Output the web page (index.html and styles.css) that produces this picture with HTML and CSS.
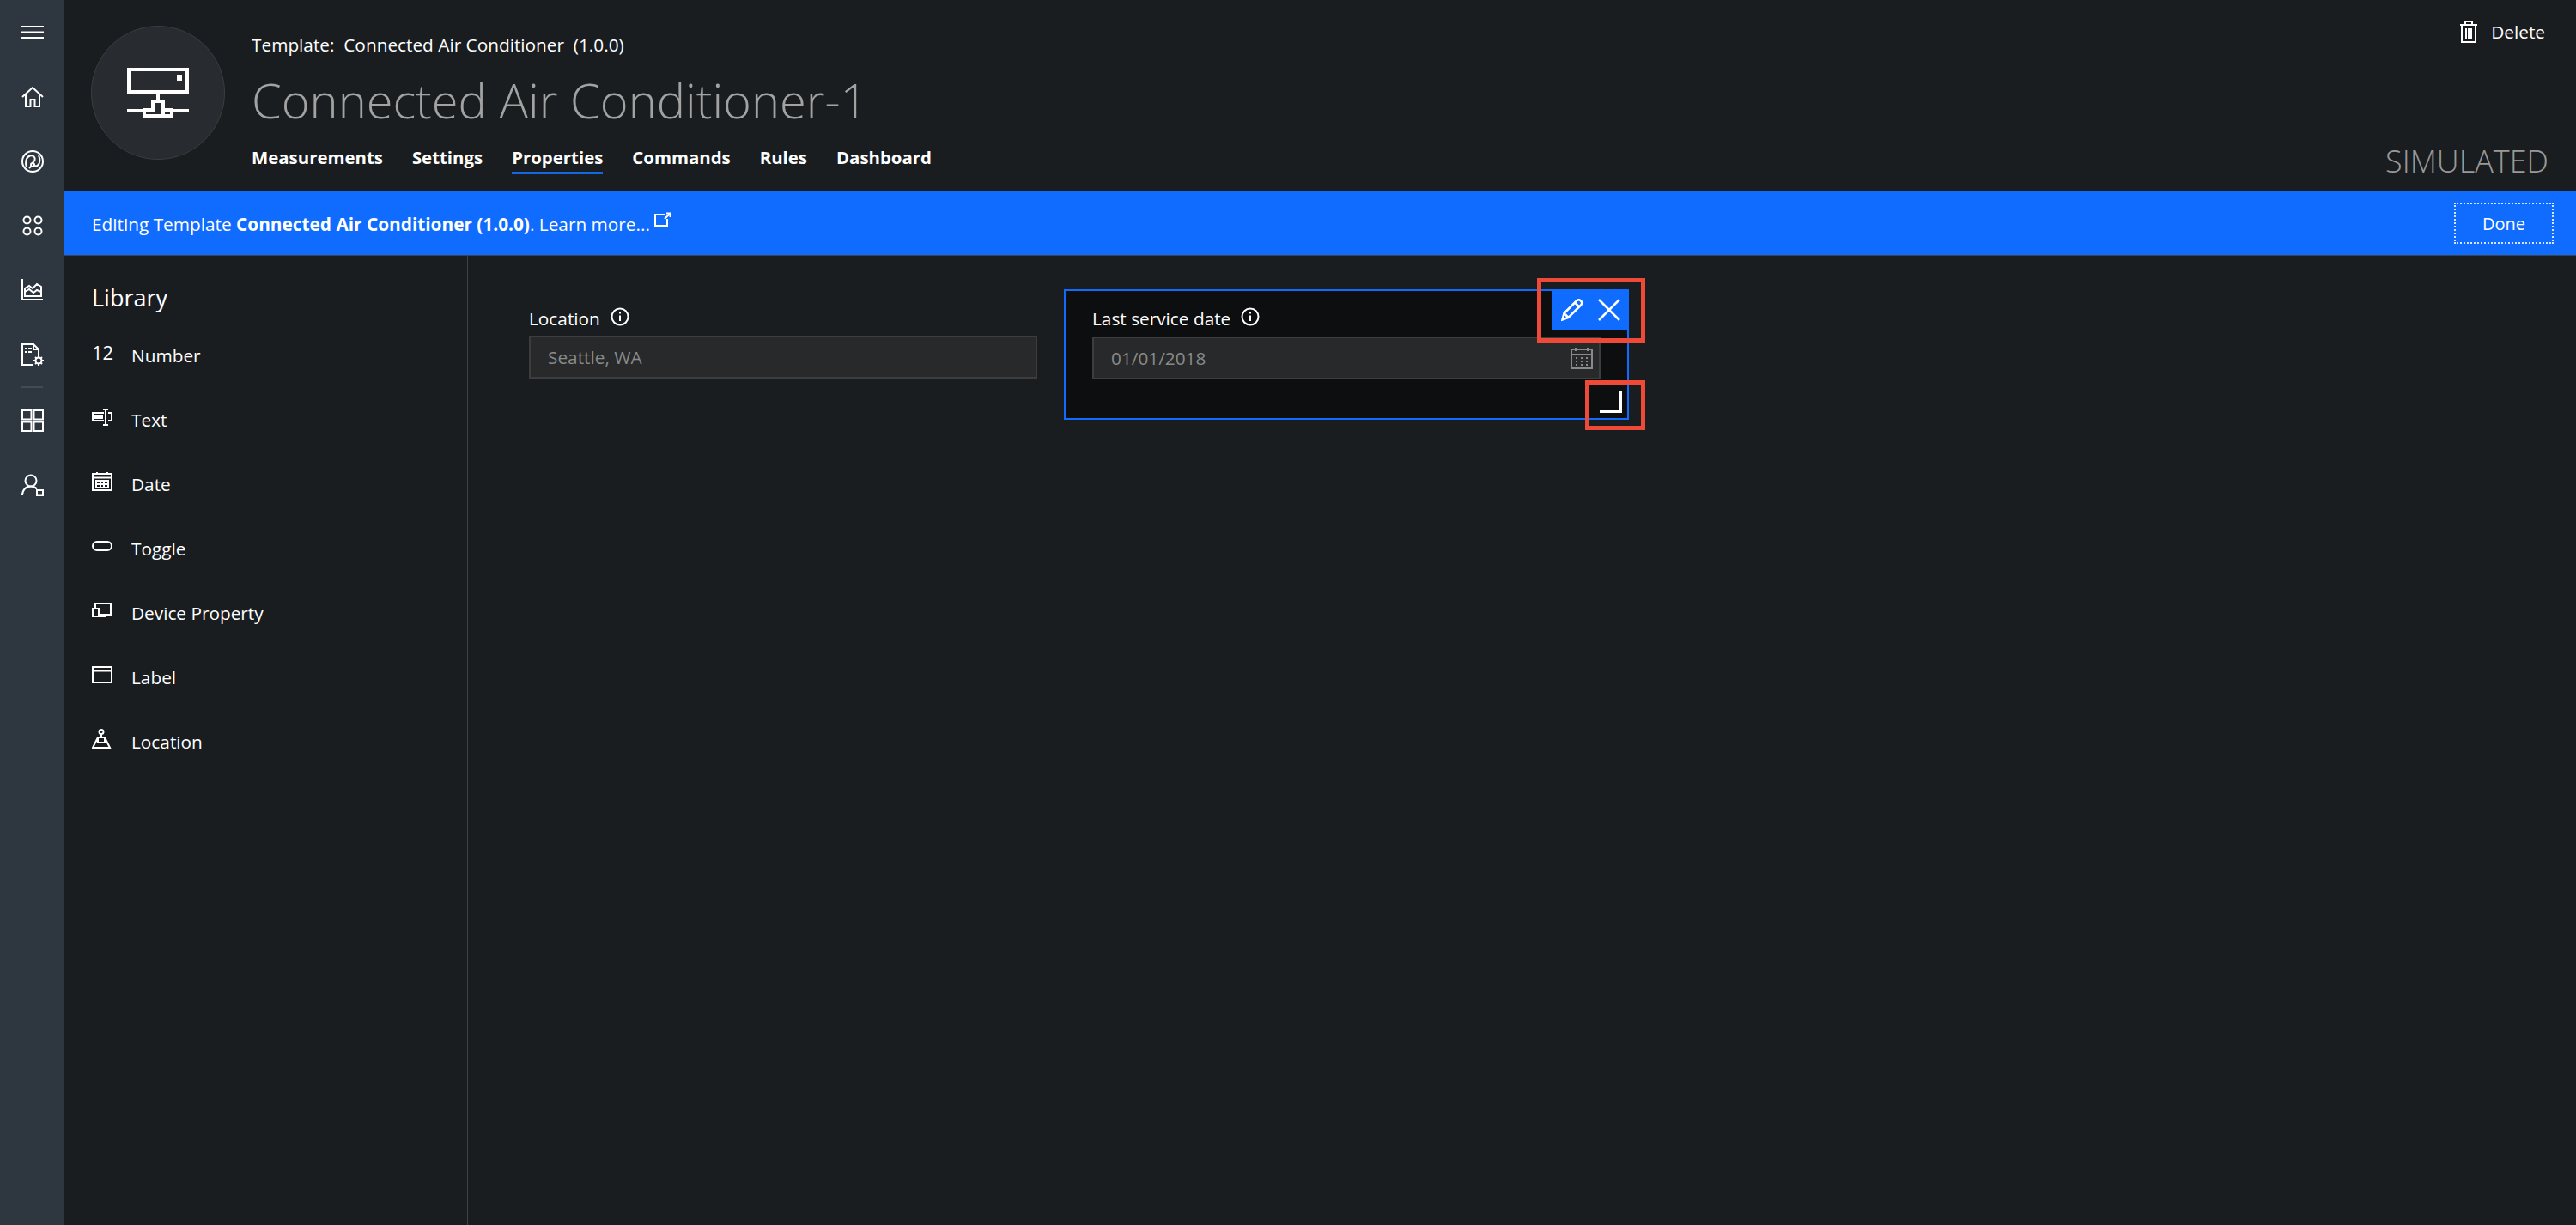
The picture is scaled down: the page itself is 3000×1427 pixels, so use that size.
FILE: index.html
```html
<!DOCTYPE html>
<html lang="en">
<head>
    <meta charset="UTF-8">
    <meta name="viewport" content="width=device-width, initial-scale=1.0">
    <title>Connected Air Conditioner-1</title>
    <link rel="stylesheet" href="styles.css">
</head>
<body>
    <nav class="rail">
        <div class="rail-item"><svg class="rail-icon" viewBox="0 0 26 26"><path d="M0 6h26M0 12.500h26M0 19h26"/></svg></div>
        <div class="rail-item"><svg class="rail-icon" viewBox="0 0 26 26"><path d="M1 13 13 2l12 11M5 10v14h5.500v-8h5v8H21V10"/></svg></div>
        <div class="rail-item"><svg class="rail-icon" viewBox="0 0 26 26"><circle cx="13" cy="13" r="12"/><path d="M6 20c-2-5-1-12 4-13.500 4-1 6.500 2 5.500 5-.5 1.500-2 2-2.500 3.500M20 6c2 4 2 9-1 11.500-1 1-2.500 1-3.500.5"/><circle cx="13" cy="17" r="2"/><path d="M11.500 18.500 9 21"/></svg></div>
        <div class="rail-item"><svg class="rail-icon" viewBox="0 0 26 26"><circle cx="6.500" cy="6.500" r="4"/><circle cx="19.500" cy="6.500" r="4"/><circle cx="6.500" cy="19.500" r="4"/><circle cx="19.500" cy="19.500" r="4"/></svg></div>
        <div class="rail-item"><svg class="rail-icon" viewBox="0 0 26 26"><path d="M1 0v24h24M4 20V11l5-3 4 3 5-5 5 3v11zM4 15l5-3 5 4 4-3 5 2"/></svg></div>
        <div class="rail-item"><svg class="rail-icon" viewBox="0 0 26 26"><path d="M14 25H1V1h13l6 6v7M14 1v6h6M4 6h2M8 6h4M4 10h2M8 10h4"/><circle cx="20" cy="20" r="3.500"/><path d="M20 14v2.500M20 23.500V26M14 20h2.500M23.500 20H26M16 16l1.500 1.500M22.500 22.500 24 24M24 16l-1.500 1.500M17.500 22.500 16 24"/></svg></div>
        <div class="rail-rule"></div>
        <div class="rail-item"><svg class="rail-icon" viewBox="0 0 26 26"><path d="M1 1h10.500v10.500H1zM14.500 1H25v10.500H14.500zM1 14.500h10.500V25H1zM14.500 14.500H25V25H14.500z"/></svg></div>
        <div class="rail-item"><svg class="rail-icon" viewBox="0 0 26 26"><circle cx="11" cy="8" r="6.500"/><path d="M1 25c0-6 4-10.500 10-10.500 3 0 5 1 7 3M18 19h7v6.500h-7z"/></svg></div>
    </nav>

    <div class="page">
        <header class="head">
            <div class="avatar">
                <svg class="avatar-icon" viewBox="0 0 72 58"><path d="M2 2h68v26H2zM60 10h2v3h-2zM36 28v12M30 39h12v17H20v-7h10zM42 39v10h10v7H42M0 50h20M52 50h20M20 56h32"/></svg>
            </div>
            <div class="head-text">
                <div class="template-line">Template:&nbsp; Connected Air Conditioner&nbsp; (1.0.0)</div>
                <h1 class="title">Connected Air Conditioner-1</h1>
                <div class="tabs">
                    <a class="tab">Measurements</a>
                    <a class="tab">Settings</a>
                    <a class="tab active">Properties</a>
                    <a class="tab">Commands</a>
                    <a class="tab">Rules</a>
                    <a class="tab">Dashboard</a>
                </div>
            </div>
            <div class="head-right">
                <div class="delete">
                    <svg class="delete-icon" viewBox="0 0 22 26"><path d="M1 5h20M7 5V1h8v4M3 5v20h16V5M8 9v12M11 9v12M14 9v12"/></svg>
                    <span>Delete</span>
                </div>
                <div class="simulated">SIMULATED</div>
            </div>
        </header>

        <div class="banner">
            <div>Editing Template <b>Connected Air Conditioner (1.0.0)</b>. Learn more... <svg class="ext-icon" viewBox="0 0 20 18"><path d="M13 3H1v13h14V8M12 8l6-6M14 1.500h4.500V6"/></svg></div>
            <button class="done">Done</button>
        </div>

        <div class="body">
            <aside class="library">
                <h2 class="library-title">Library</h2>
                <div class="lib-item"><span class="lib-num">12</span><span>Number</span></div>
                <div class="lib-item">
                    <svg class="lib-icon" viewBox="0 0 24 24"><path d="M14 7H1v9h13M19 7h4v9h-4M13 3h3v18h-3M16 3h3M16 21h3"/><path class="lib-fill" d="M3 10h9v3H3z"/></svg>
                    <span>Text</span>
                </div>
                <div class="lib-item">
                    <svg class="lib-icon" viewBox="0 0 24 24"><path d="M1 3h22v19H1zM1 7.500h22M6 1v3M18 1v3M5 11h14v8H5zM5 15h14M10 11v8M14 11v8"/></svg>
                    <span>Date</span>
                </div>
                <div class="lib-item">
                    <svg class="lib-icon" viewBox="0 0 24 24"><rect x="1" y="7" width="22" height="10" rx="5"/></svg>
                    <span>Toggle</span>
                </div>
                <div class="lib-item">
                    <svg class="lib-icon" viewBox="0 0 24 24"><path d="M4 9V4h18v13H10M1 10h7v9H1zM8 19h9"/></svg>
                    <span>Device Property</span>
                </div>
                <div class="lib-item">
                    <svg class="lib-icon" viewBox="0 0 24 24"><path d="M1 3h22v18H1zM1 7.500h22"/></svg>
                    <span>Label</span>
                </div>
                <div class="lib-item">
                    <svg class="lib-icon" viewBox="0 0 24 24"><circle cx="11" cy="3.500" r="2.500"/><path d="M11 6v4M7 10h8l6 12H1zM7 10v6h8v-6"/></svg>
                    <span>Location</span>
                </div>
            </aside>

            <main class="canvas">
                <div class="field plain">
                    <div class="field-label">Location <svg class="info-icon" viewBox="0 0 22 22"><circle cx="11" cy="11" r="9.500"/><path d="M11 9.500V16M11 5.500v2"/></svg></div>
                    <div class="input">Seattle, WA</div>
                </div>
                <div class="field selected">
                    <div class="field-label">Last service date <svg class="info-icon" viewBox="0 0 22 22"><circle cx="11" cy="11" r="9.500"/><path d="M11 9.500V16M11 5.500v2"/></svg></div>
                    <div class="input">
                        01/01/2018
                        <svg class="cal-icon" viewBox="0 0 26 26"><path d="M1 3h24v22H1zM1 9h24M6 1v4M20 1v4M6 13h2M12 13h2M18 13h2M6 17h2M12 17h2M18 17h2M6 21h2M12 21h2M18 21h2"/></svg>
                    </div>
                    <div class="toolbar">
                        <svg class="tool-icon" viewBox="0 0 26 26"><path d="M1.500 24.500 3.500 17 18 2.500c1.500-1.500 3.500-1.500 5 0s1.500 3.500 0 5L8.500 22zM3.500 17l5 5M16 4.500l5.500 5.500"/></svg>
                        <svg class="tool-icon" viewBox="0 0 26 26"><path d="M1 1l24 24M25 1 1 25"/></svg>
                    </div>
                    <div class="resize"></div>
                </div>
                <div class="callout callout-tools"></div>
                <div class="callout callout-resize"></div>
            </main>
        </div>
    </div>
</body>
</html>
```

FILE: styles.css
```css
* {
    box-sizing: border-box;
}
html, body {
    height: 100%;
}
body {
    margin: 0;
    display: flex;
    height: 1427px;
    overflow: hidden;
    font-family: "Open Sans", "Noto Sans", sans-serif;
    background-color: #1a1d1f;
    color: #fff;
}
svg {
    fill: none;
    stroke: currentColor;
}

/* left rail */
.rail {
    width: 75px;
    flex-shrink: 0;
    background-color: #2e3640;
}
.rail-item {
    height: 75px;
    display: flex;
    align-items: center;
    justify-content: center;
}
.rail-icon {
    width: 26px;
    height: 26px;
    stroke-width: 2;
}
.rail-rule {
    height: 2px;
    width: 25px;
    margin-left: 25px;
    background-color: #454b53;
}

.page {
    flex: 1;
    display: flex;
    flex-direction: column;
    min-width: 0;
}

/* header */
.head {
    height: 223px;
    flex-shrink: 0;
    display: flex;
    padding: 30px 32px 0 31px;
    border-bottom: 1px solid #3f4143;
}
.avatar {
    width: 156px;
    height: 156px;
    flex-shrink: 0;
    display: flex;
    align-items: center;
    justify-content: center;
    border-radius: 50%;
    background-color: #282b2f;
    border: 1px solid #3b3e41;
}
.avatar-icon {
    width: 72px;
    height: 58px;
    stroke-width: 4;
    margin-top: -1px;
}
.head-text {
    flex: 1;
    margin-left: 31px;
}
.template-line {
    font-size: 20.8px;
    line-height: 26px;
    margin-top: 9px;
}
.title {
    margin: 13px 0 0;
    font-size: 56px;
    font-weight: 300;
    line-height: 76px;
    color: #a2a2a2;
}
.tabs {
    display: flex;
    gap: 34px;
    margin-top: 15px;
}
.tab {
    font-size: 20.4px;
    font-weight: 700;
    line-height: 28px;
    padding-bottom: 3px;
    border-bottom: 3px solid transparent;
}
.tab.active {
    border-bottom-color: #1467e0;
}
.head-right {
    display: flex;
    flex-direction: column;
    align-items: flex-end;
    justify-content: space-between;
    padding-bottom: 9px;
}
.delete {
    display: flex;
    align-items: center;
    gap: 15px;
    margin: -7px 4px 0 0;
    font-size: 20.8px;
}
.delete-icon {
    width: 22px;
    height: 26px;
    stroke-width: 2;
}
.simulated {
    font-size: 36px;
    font-weight: 300;
    line-height: 50px;
    color: #999;
}

/* blue banner */
.banner {
    height: 75px;
    flex-shrink: 0;
    display: flex;
    align-items: center;
    justify-content: space-between;
    padding: 0 26px 0 32px;
    background-color: #106cff;
    border-bottom: 1px solid #3f4143;
    font-size: 20.8px;
}
.banner > div {
    margin-top: 2px;
}
.ext-icon {
    width: 20px;
    height: 18px;
    stroke-width: 2;
    vertical-align: 4px;
}
.done {
    width: 116px;
    height: 48px;
    background: none;
    border: 2px dotted #d5e4ff;
    color: #fff;
    font-family: inherit;
    font-size: 20px;
}

/* library + canvas */
.body {
    flex: 1;
    display: flex;
    min-height: 0;
}
.library {
    width: 470px;
    flex-shrink: 0;
    padding: 28px 0 0 32px;
    border-right: 1px solid #3f4143;
}
.library-title {
    margin: 0 0 8px;
    font-size: 27px;
    font-weight: 400;
    line-height: 42px;
}
.lib-item {
    height: 75px;
    display: flex;
    align-items: center;
    font-size: 20.8px;
}
.lib-num {
    width: 46px;
    font-size: 22px;
    margin-top: -8px;
}
.lib-icon {
    width: 24px;
    height: 24px;
    margin-right: 22px;
    margin-top: -6px;
    stroke-width: 2;
}
.lib-fill {
    fill: currentColor;
}
.canvas {
    flex: 1;
    position: relative;
    display: flex;
    align-items: flex-start;
    gap: 31px;
    padding: 39px 0 0 71px;
}
.field {
    width: 592px;
    position: relative;
}
.field.plain {
    padding-top: 20px;
}
.field.selected {
    width: 658px;
    height: 152px;
    padding: 20px 31px;
    background-color: #0d0e10;
    border: 2px solid #106cff;
}
.field-label {
    display: flex;
    align-items: center;
    gap: 12px;
    font-size: 20.8px;
    line-height: 28px;
    margin-bottom: 6px;
}
.field.selected .field-label {
    margin: -2px 0 7px;
}
.info-icon {
    width: 22px;
    height: 22px;
    stroke-width: 2;
    margin-top: -4px;
}
.input {
    height: 50px;
    display: flex;
    align-items: center;
    justify-content: space-between;
    padding: 0 7px 0 20px;
    background-color: #27292b;
    border: 2px solid #3b3d3f;
    color: #8a8a8a;
    font-size: 20.8px;
}
.cal-icon {
    width: 26px;
    height: 26px;
    stroke-width: 2;
}

/* selected field overlays */
.toolbar {
    position: absolute;
    top: -2px;
    right: -2px;
    width: 89px;
    height: 47px;
    display: flex;
    align-items: center;
    justify-content: space-between;
    padding: 0 10px;
    background-color: #106cff;
}
.tool-icon {
    width: 26px;
    height: 26px;
    stroke-width: 2.500;
}
.resize {
    position: absolute;
    right: 6px;
    bottom: 6px;
    width: 26px;
    height: 26px;
    border-right: 3px solid #fff;
    border-bottom: 3px solid #fff;
}
.callout {
    position: absolute;
    border: 5px solid #ef4a38;
}
.callout-tools {
    left: 1245px;
    top: 26px;
    width: 126px;
    height: 75px;
}
.callout-resize {
    left: 1301px;
    top: 145px;
    width: 70px;
    height: 58px;
}
```
